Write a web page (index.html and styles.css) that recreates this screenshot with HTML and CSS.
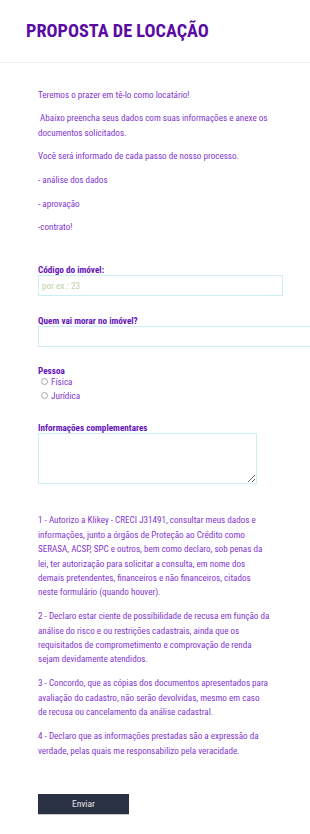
FILE: index.html
```html
<!DOCTYPE html>
<html lang="pt-BR">
<head>
    <meta charset="UTF-8">
    <meta name="viewport" content="width=device-width, initial-scale=1.0">
    <title>Proposta de Locação</title>
    <link rel="stylesheet" href="styles.css">
</head>
<body>
    <header class="header">
        <h1>PROPOSTA DE LOCAÇÃO</h1>
    </header>

    <main class="content">
        <div class="intro">
            <p>Teremos o prazer em tê-lo como locatário!</p>
            <p>&nbsp;Abaixo preencha seus dados com suas informações e anexe os documentos solicitados.</p>
            <p>Você será informado de cada passo de nosso processo.</p>
            <p>- análise dos dados</p>
            <p>- aprovação</p>
            <p>-contrato!</p>
        </div>

        <form id="propostaForm" class="form" action="#" method="post">
            <div class="form-group">
                <label for="codigo">Código do imóvel:</label>
                <input type="text" id="codigo" name="codigo" placeholder="por ex.: 23">
            </div>
            <div class="form-group">
                <label for="morador">Quem vai morar no imóvel?</label>
                <input type="text" id="morador" name="morador" class="wide">
            </div>
            <div class="form-group">
                <span class="group-title">Pessoa</span>
                <label class="radio"><input type="radio" name="pessoa" value="fisica"> Física</label>
                <label class="radio"><input type="radio" name="pessoa" value="juridica"> Jurídica</label>
            </div>
            <div class="form-group">
                <label for="info">Informações complementares</label>
                <textarea id="info" name="info"></textarea>
            </div>

            <div class="terms">
                <p>1 - Autorizo a Klikey - CRECI J31491, consultar meus dados e informações, junto a órgãos de Proteção ao Crédito como SERASA, ACSP, SPC e outros, bem como declaro, sob penas da lei, ter autorização para solicitar a consulta, em nome dos demais pretendentes, financeiros e não financeiros, citados neste formulário (quando houver).</p>
                <p>2 - Declaro estar ciente de possibilidade de recusa em função da análise do risco e ou restrições cadastrais, ainda que os requisitados de comprometimento e comprovação de renda sejam devidamente atendidos.</p>
                <p>3 - Concordo, que as cópias dos documentos apresentados para avaliação do cadastro, não serão devolvidas, mesmo em caso de recusa ou cancelamento da análise cadastral.</p>
                <p>4 - Declaro que as informações prestadas são a expressão da verdade, pelas quais me responsabilizo pela veracidade.</p>
            </div>

            <button type="submit" class="btn">Enviar</button>
        </form>
    </main>
</body>
</html>
```
FILE: styles.css
```css
body {
    font-family: "Roboto Condensed", Roboto, sans-serif;
    font-stretch: 75%;
    margin: 0;
    padding: 0;
    background: #ffffff;
    color: #8236d0;
    overflow-x: hidden;
}

.header {
    padding: 21px 26px 0;
    height: 41px;
    border-bottom: 1px solid #eeeeee;
}

.header h1 {
    margin: 0;
    font-size: 18.3px;
    line-height: 19px;
    font-weight: 700;
    color: #5a0ba3;
}

.content {
    width: 232px;
    padding: 24.5px 0 40px 38px;
    font-size: 9.1px;
}

.intro {
    display: flex;
    flex-direction: column;
    gap: 9.3px;
}

.intro p,
.terms p {
    margin: 0;
    line-height: 14.4px;
}

.form {
    display: flex;
    flex-direction: column;
    gap: 19px;
    margin-top: 28.75px;
}

.form-group label,
.group-title {
    display: block;
    font-size: 9.2px;
    font-weight: 700;
    line-height: 11px;
    color: #6614b8;
}

.group-title {
    line-height: 9px;
}

.form-group input[type="text"] {
    display: block;
    box-sizing: border-box;
    width: 245px;
    height: 21px;
    padding: 0 3px;
    margin: 0;
    font-family: inherit;
    font-size: 9.2px;
    border: 1px solid #cdeef2;
    outline: none;
    color: #555555;
}

.form-group input.wide {
    width: 300px;
}

.form-group input::placeholder {
    color: #c2d1a4;
}

.form-group .radio {
    font-weight: 400;
    line-height: 14px;
    color: #8236d0;
    display: flex;
    align-items: center;
    gap: 3px;
    padding-left: 3px;
}

.radio input {
    appearance: none;
    width: 7px;
    height: 7px;
    margin: 0;
    border: 1px solid #a9a9a9;
    border-radius: 50%;
    background: #ffffff;
}

.form-group textarea {
    display: block;
    box-sizing: border-box;
    width: 219px;
    height: 51px;
    margin: 0;
    border: 1px solid #cdeef2;
    outline: none;
}

.terms {
    display: flex;
    flex-direction: column;
    gap: 9.5px;
    margin-top: 10.75px;
}

.btn {
    width: 91px;
    height: 21px;
    margin-top: 16.7px;
    background: #2b3144;
    color: #e6e6e6;
    border: none;
    border-bottom: 1px solid #c7c9cf;
    font-family: inherit;
    font-size: 9.5px;
    cursor: pointer;
}
```
